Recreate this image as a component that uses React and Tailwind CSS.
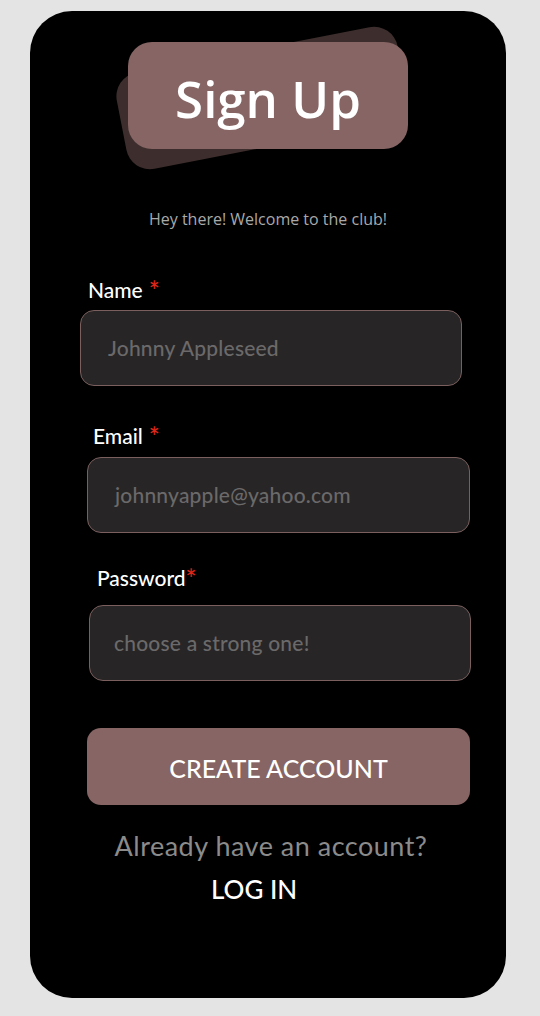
import React from 'react';

const label = "h-6 text-[21px] font-medium text-white leading-6 flex items-start";
const star = "text-[#e0281a] text-[26px] leading-none";
const field = "h-[76px] rounded-[14px] border border-[#7a5f5e] bg-[#272526] flex items-center";
const placeholder = "text-[21px] font-medium tracking-[0.2px] text-[#6b6969]";

const App = () => {
    return (
        <div className="w-[540px] h-[1016px] bg-[#e4e4e4] pt-[11px] overflow-hidden" style={{ fontFamily: 'Lato, sans-serif' }}>
            <div className="relative ml-[30px] w-[476px] h-[987px] rounded-[42px] bg-black">
                <div className="absolute left-[89px] top-[38px] w-[286px] h-[98px] rounded-[24px] bg-[#3d2e2d] -rotate-[11deg]"></div>
                <div className="relative ml-[98px] pt-[31px] w-[280px]">
                    <div className="h-[107px] pt-[6px] rounded-[24px] bg-[#866564] flex items-center justify-center">
                        <span className="text-[51px] font-semibold text-white" style={{ fontFamily: '"Open Sans", sans-serif' }}>Sign Up</span>
                    </div>
                </div>

                <p className="mt-[58px] text-center text-[16px] leading-6 text-[#a9a9a9]" style={{ fontFamily: '"Open Sans", sans-serif' }}>
                    Hey there! Welcome to the club!
                </p>

                <div className={`mt-[47px] ml-[58px] ${label}`}>
                    <span>Name</span>
                    <span className={`ml-[6px] ${star}`}>*</span>
                </div>
                <div className={`mt-[8px] ml-[50px] w-[382px] pl-[27px] ${field}`}>
                    <span className={placeholder}>Johnny Appleseed</span>
                </div>

                <div className={`mt-[38px] ml-[63px] ${label}`}>
                    <span>Email</span>
                    <span className={`ml-[6px] ${star}`}>*</span>
                </div>
                <div className={`mt-[9px] ml-[57px] w-[383px] pl-[27px] ${field}`}>
                    <span className={placeholder}>johnnyapple@yahoo.com</span>
                </div>

                <div className={`mt-[33px] ml-[67px] ${label}`}>
                    <span>Password</span>
                    <span className={star}>*</span>
                </div>
                <div className={`mt-[15px] ml-[59px] w-[382px] pl-[24px] ${field}`}>
                    <span className={placeholder}>choose a strong one!</span>
                </div>

                <button className="mt-[47px] ml-[57px] w-[383px] h-[77px] pt-[4px] rounded-[14px] bg-[#866564] flex items-center justify-center">
                    <span className="text-[25px] font-medium text-white">CREATE ACCOUNT</span>
                </button>

                <p className="mt-[25px] pl-[6px] text-center text-[27px] tracking-[0.5px] leading-8 text-[#8b8b8b]">
                    Already have an account?
                </p>
                <p className="mt-[11px] ml-[181px] text-[26px] leading-8 font-medium text-white">
                    LOG IN
                </p>
            </div>
        </div>
    );
};

export default App;
